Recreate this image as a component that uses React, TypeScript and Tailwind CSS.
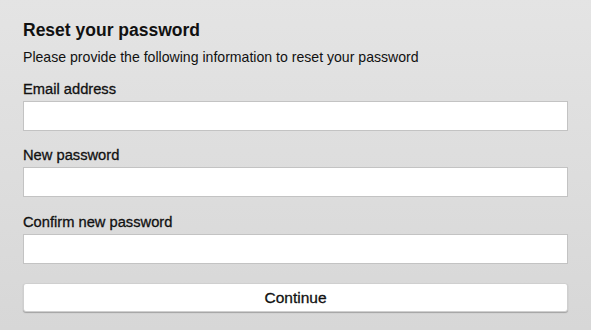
import React from 'react';

export default function App() {
  return (
    <div className="w-[591px] h-[330px] bg-gradient-to-b from-[#e4e4e4] to-[#d7d7d7] px-[23px] pt-[19px] font-['Liberation_Sans',Arial,sans-serif] text-[#111]">
      <h1 className="text-[17.5px] leading-[22px] font-bold">Reset your password</h1>
      <p className="mt-[8px] text-[14.1px] leading-[17px]">
        Please provide the following information to reset your password
      </p>

      <form className="mt-[14px] flex flex-col" onSubmit={(e) => e.preventDefault()}>
        <label className="text-[14.7px] leading-[18px] [-webkit-text-stroke:0.3px]">Email address</label>
        <input type="email" className="mt-[3px] h-[30px] w-full bg-white border border-[#c3c3c3] outline-none" />

        <label className="mt-[15px] text-[14.7px] leading-[18px] [-webkit-text-stroke:0.3px]">New password</label>
        <input type="password" className="mt-[3px] h-[30px] w-full bg-white border border-[#c3c3c3] outline-none" />

        <label className="mt-[16px] text-[14.7px] leading-[18px] [-webkit-text-stroke:0.3px]">Confirm new password</label>
        <input type="password" className="mt-[3px] h-[30px] w-full bg-white border border-[#c3c3c3] outline-none" />

        <button
          type="submit"
          className="mt-[19px] h-[29px] w-full bg-white rounded-[3px] border border-[#cfcfcf] shadow-[0_1px_1px_rgba(0,0,0,0.25)] text-[15.5px] [-webkit-text-stroke:0.3px]">
          Continue
        </button>
      </form>
    </div>);

}
